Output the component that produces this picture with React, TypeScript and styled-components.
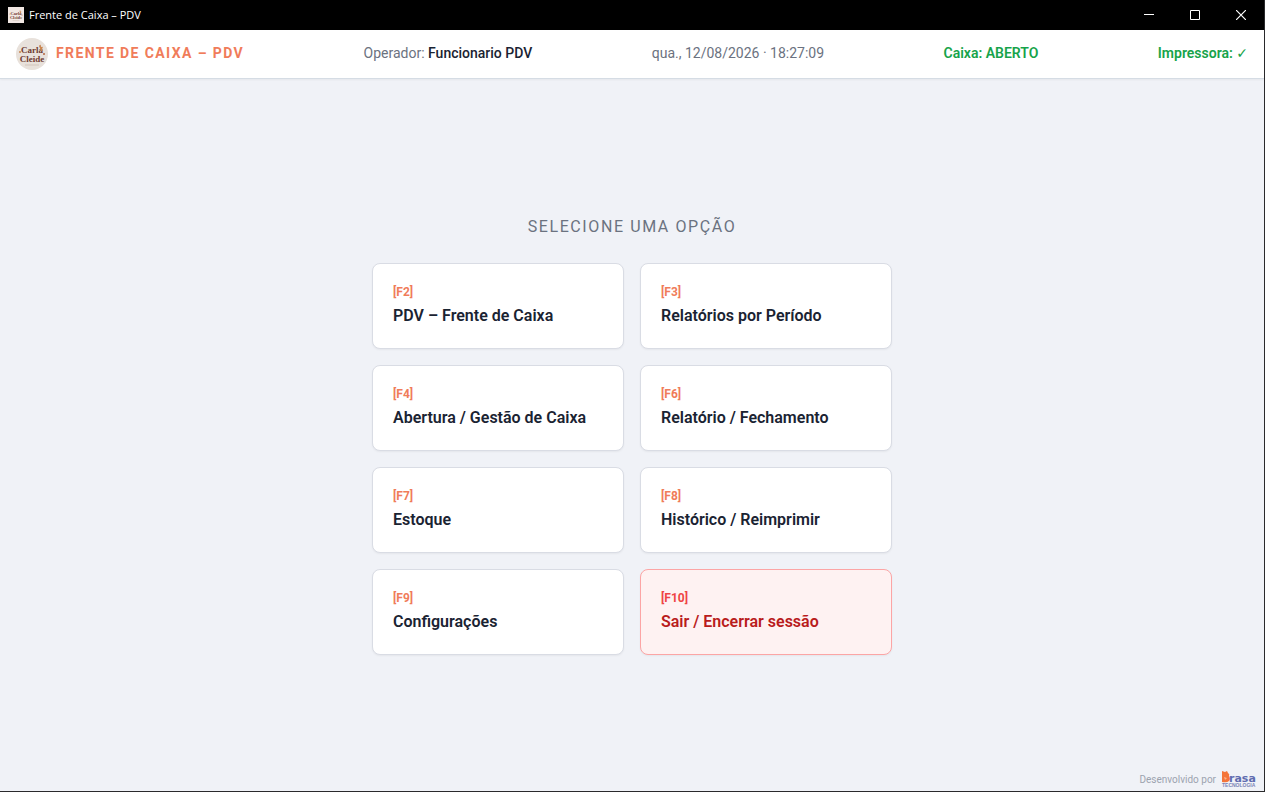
import React from 'react';
import styled, { createGlobalStyle } from 'styled-components';

const GlobalStyle = createGlobalStyle`
  *, *::before, *::after { box-sizing: border-box; }
  html, body, #root { height: 100%; margin: 0; }
  body { background: #2a2a2c; font-family: Roboto, "Liberation Sans", sans-serif; }
  button { font: inherit; cursor: pointer; }
`;

const Window = styled.div`
  display: flex;
  flex-direction: column;
  min-height: 100%;
  border: solid #2a2a2c;
  border-width: 0 1px 1px 0;
  background: #f0f2f7;
`;

const TitleBar = styled.div`
  display: flex;
  align-items: center;
  height: 30px;
  padding-left: 8px;
  background: #000;
  color: #fff;
`;

const WindowTitle = styled.span`
  flex: 1;
  margin-left: 5px;
  font-family: "Open Sans", "Noto Sans", sans-serif;
  font-size: 11px;
  line-height: 16px;
`;

const WindowButton = styled.button`
  display: flex;
  align-items: center;
  justify-content: center;
  width: 46px;
  height: 30px;
  padding: 0;
  border: 0;
  background: transparent;
  color: #fff;
`;

const Header = styled.header`
  display: flex;
  align-items: center;
  justify-content: space-between;
  height: 49px;
  padding: 0 16px;
  border-bottom: 1px solid #d5dce4;
  background: #fff;
  box-shadow: 0 1px 2px rgba(0, 0, 0, 0.05);
  color: #6b7280;
  font-size: 14px;
  line-height: 20px;
`;

const Brand = styled.div`
  display: flex;
  align-items: center;
  gap: 8px;
`;

const BrandName = styled.h1`
  margin: 0;
  padding-bottom: 2px;
  color: #f07c5a;
  font-size: 14px;
  font-weight: 700;
  letter-spacing: 0.1em;
  line-height: 20px;
`;

const HeaderItem = styled.span`
  padding-bottom: 2px;
  strong { color: #1a2332; font-weight: 500; }
`;

const Status = styled(HeaderItem)`
  color: #16a34a;
  font-weight: 600;
`;

const Check = styled.span`
  font-family: "DejaVu Sans", sans-serif;
  font-weight: 400;
  line-height: 1;
`;

const Main = styled.main`
  display: flex;
  flex: 1;
  flex-direction: column;
  align-items: center;
  justify-content: center;
  padding: 24px;
`;

const Heading = styled.h2`
  margin: 0 0 24px;
  color: #6b7280;
  font-size: 16px;
  font-weight: 400;
  letter-spacing: 0.1em;
  line-height: 24px;
  text-transform: uppercase;
`;

const Menu = styled.nav`
  display: grid;
  grid-template-columns: 1fr 1fr;
  gap: 16px;
  width: 100%;
  max-width: 520px;
`;

const Option = styled.button<{ $danger?: boolean }>`
  display: flex;
  flex-direction: column;
  gap: 4px;
  padding: 20px;
  border: 1px solid ${p => (p.$danger ? '#fca5a5' : '#d9dce4')};
  border-radius: 8px;
  background: ${p => (p.$danger ? '#fef2f2' : '#fff')};
  box-shadow: 0 1px 2px rgba(0, 0, 0, 0.05);
  color: ${p => (p.$danger ? '#b91c1c' : '#1a2332')};
  text-align: left;
`;

const Shortcut = styled.span<{ $danger?: boolean }>`
  color: ${p => (p.$danger ? '#ef4444' : '#f07c5a')};
  font-size: 12px;
  font-weight: 700;
  line-height: 16px;
`;

const OptionLabel = styled.span`
  font-size: 16px;
  font-weight: 600;
  line-height: 24px;
`;

const Credit = styled.footer`
  position: absolute;
  right: 8px;
  bottom: 4px;
  display: flex;
  align-items: flex-end;
  gap: 5px;
  color: #9ca3af;
  font-size: 10px;
  line-height: 16px;
`;

function ShopLogo({ size, round }: { size: number; round?: boolean }) {
  return (
    <svg width={size} height={size} viewBox="0 0 32 32" aria-hidden="true">
      {round ? <circle cx="16" cy="16" r="16" fill="#e8e1db" /> : <rect width="32" height="32" fill="#f1e7e3" />}
      <g fill="#6f3a30" fontFamily="Liberation Serif, serif" fontWeight="700" textAnchor="middle">
        <text x="16" y="15" fontSize="9">Carla</text>
        <text x="16" y="24" fontSize="9">Cleide</text>
      </g>
      <path d="M23 8q2-3 2 1q3-1 1 2q2 2-1 2z" fill="#c9854f" />
      <circle cx="4" cy="14" r="1" fill="#c9854f" />
      <circle cx="28" cy="16" r="1" fill="#b5653f" />
      <path d="M9 27h14" stroke="#d3c5bb" strokeWidth="1" />
    </svg>
  );
}

function BrasaLogo() {
  return (
    <svg width="36" height="18" viewBox="0 0 36 18" role="img" aria-label="Brasa Tecnologia">
      <path d="M1 1l3 1l2-1l1 2q2 1 1 3q2 3 0 5q-2 2-7 1z" fill="#f4753a" />
      <path d="M3 7l3 1l-2 2z" fill="#f9b28c" />
      <text x="8" y="12" fill="#5f6cb0" fontFamily="DejaVu Sans, sans-serif" fontWeight="700" fontSize="11">rasa</text>
      <text x="1" y="17" fill="#7a84b6" fontFamily="Liberation Sans, sans-serif" fontWeight="700" fontSize="5">TECNOLOGIA</text>
    </svg>
  );
}

const options = [
  { id: 'F2', label: 'PDV – Frente de Caixa' },
  { id: 'F3', label: 'Relatórios por Período' },
  { id: 'F4', label: 'Abertura / Gestão de Caixa' },
  { id: 'F6', label: 'Relatório / Fechamento' },
  { id: 'F7', label: 'Estoque' },
  { id: 'F8', label: 'Histórico / Reimprimir' },
  { id: 'F9', label: 'Configurações' },
  { id: 'F10', label: 'Sair / Encerrar sessão', danger: true },
];

export default function App() {
  return (
    <Window>
      <GlobalStyle />
      <TitleBar>
        <ShopLogo size={16} />
        <WindowTitle>Frente de Caixa – PDV</WindowTitle>
        <WindowButton aria-label="Minimizar">
          <svg width="10" height="10"><path d="M0 4.5h10" stroke="currentColor" /></svg>
        </WindowButton>
        <WindowButton aria-label="Maximizar">
          <svg width="10" height="10"><path d="M.5.5h9v9h-9z" fill="none" stroke="currentColor" /></svg>
        </WindowButton>
        <WindowButton aria-label="Fechar">
          <svg width="10" height="10"><path d="M0 0l10 10M10 0L0 10" stroke="currentColor" strokeWidth="1.2" /></svg>
        </WindowButton>
      </TitleBar>
      <Header>
        <Brand>
          <ShopLogo size={32} round />
          <BrandName>FRENTE DE CAIXA – PDV</BrandName>
        </Brand>
        <HeaderItem>Operador: <strong>Funcionario PDV</strong></HeaderItem>
        <HeaderItem as="time" dateTime="2026-08-12T18:27:09">qua., 12/08/2026 · 18:27:09</HeaderItem>
        <Status>Caixa: ABERTO</Status>
        <Status>Impressora: <Check>✓</Check></Status>
      </Header>
      <Main>
        <Heading>Selecione uma opção</Heading>
        <Menu>
          {options.map(o => (
            <Option key={o.id} $danger={o.danger}>
              <Shortcut $danger={o.danger}>[{o.id}]</Shortcut>
              <OptionLabel>{o.label}</OptionLabel>
            </Option>
          ))}
        </Menu>
      </Main>
      <Credit>
        <span>Desenvolvido por</span>
        <BrasaLogo />
      </Credit>
    </Window>
  );
}
